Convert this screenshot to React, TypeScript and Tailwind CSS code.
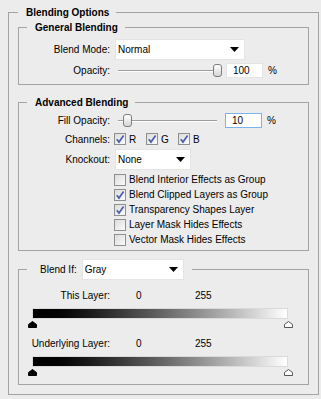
import React from "react"

function Arrow() {
  return (
    <svg width="9" height="5" viewBox="0 0 9 5">
      <path d="M0 0H9L4.5 5Z" fill="#000" />
    </svg>
  )
}

function Select({ value, w }: { value: string; w: string }) {
  return (
    <div className={`${w} h-[21px] bg-white border border-[#e4e4e4] flex items-center justify-between pl-[2px] pr-[5px]`}>
      <span>{value}</span>
      <Arrow />
    </div>
  )
}

function Check({ on }: { on?: boolean }) {
  return (
    <div className="w-[12px] h-[12px] border border-[#8e8f8f] bg-linear-to-br from-[#dcdcdc] to-[#fafafa] flex items-center justify-center">
      {on && (
        <svg width="10" height="10" viewBox="0 0 10 10">
          <path d="M1.8 5.2L4 8L8.6 1.4" fill="none" stroke="#4a5fb0" strokeWidth="1.7" />
        </svg>
      )}
    </div>
  )
}

function Slider({ thumb }: { thumb: number }) {
  return (
    <div className="relative w-[104px] h-[15px] flex items-center">
      <div className="ml-[3px] w-[99px] h-[2px] border-t border-[#9c9c9c] border-b border-b-white" />
      <div
        className="absolute top-[1px] w-[9px] h-[13px] rounded-[3px] border border-[#7d7d7d] bg-linear-to-b from-white to-[#d6d6d6]"
        style={{ left: thumb }}
      />
    </div>
  )
}

function NumBox({ value, focus }: { value: string; focus?: boolean }) {
  return (
    <div className="flex items-center">
      <div
        className={`w-[37px] h-[15px] bg-white border pl-[6px] flex items-center ${focus ? "border-[#7eb4ea]" : "border-[#e4e4e4]"}`}
      >
        {value}
      </div>
      <span className="ml-[5px]">%</span>
    </div>
  )
}

function Pin({ dark }: { dark?: boolean }) {
  return (
    <svg width="9" height="7" viewBox="0 0 9 7">
      <path
        d="M0.5 6.5V3.5L4.5 0.5L8.5 3.5V6.5Z"
        fill={dark ? "#000" : "#fff"}
        stroke={dark ? "#000" : "#555"}
      />
    </svg>
  )
}

function Ramp() {
  return (
    <div className="relative ml-[13px] w-[256px]">
      <div className="h-[11px] border border-[#dadada] bg-linear-to-r from-black to-white" />
      <div className="relative h-[7px] mt-[2px]">
        <div className="absolute left-[-4px] top-0">
          <Pin dark />
        </div>
        <div className="absolute right-[-5px] top-0">
          <Pin />
        </div>
      </div>
    </div>
  )
}

const Row = ({ label, children, h }: { label: string; children: React.ReactNode; h: string }) => (
  <div className={`flex items-center ${h}`}>
    <div className="w-[91px] text-right">{label}</div>
    <div className="ml-[5px] flex items-center">{children}</div>
  </div>
)

export default function App() {
  return (
    <div className="w-[321px] h-[399px] bg-[#ececec] pl-[8px] pr-[2px] pt-[6px] text-[10px] leading-[13px] text-black font-['Liberation_Sans',Arial,sans-serif]">
      <fieldset className="border border-[#a3a3a3] px-[9px] pb-[9px]">
        <legend className="pl-[8px] pr-[7px] font-bold">Blending Options</legend>

        <fieldset className="mt-[2px] border border-[#a3a3a3] pb-[6px]">
          <legend className="ml-[8px] pl-[8px] pr-[7px] font-bold">General Blending</legend>
          <div className="pt-[5px] flex flex-col gap-[3px]">
            <Row label="Blend Mode:" h="h-[21px]">
              <Select value="Normal" w="w-[130px]" />
            </Row>
            <Row label="Opacity:" h="h-[15px]">
              <Slider thumb={98} />
              <div className="ml-[7px]">
                <NumBox value="100" />
              </div>
            </Row>
          </div>
        </fieldset>

        <fieldset className="mt-[11px] border border-[#a3a3a3] pb-[3px]">
          <legend className="ml-[8px] pl-[8px] pr-[7px] font-bold">Advanced Blending</legend>
          <div className="pt-[4px] flex flex-col">
            <Row label="Fill Opacity:" h="h-[15px]">
              <Slider thumb={8} />
              <div className="ml-[6px]">
                <NumBox value="10" focus />
              </div>
            </Row>
            <div className="mt-[3px]">
              <Row label="Channels:" h="h-[16px]">
                <div className="-ml-[1px] flex items-center">
                  {["R", "G", "B"].map((c) => (
                    <div key={c} className="w-[32px] flex items-center gap-[3px]">
                      <Check on />
                      <span>{c}</span>
                    </div>
                  ))}
                </div>
              </Row>
            </div>
            <div className="mt-[2px]">
              <Row label="Knockout:" h="h-[21px]">
                <Select value="None" w="w-[76px]" />
              </Row>
            </div>
            <div className="mt-[2px] ml-[95px] flex flex-col">
              {[
                ["Blend Interior Effects as Group", false],
                ["Blend Clipped Layers as Group", true],
                ["Transparency Shapes Layer", true],
                ["Layer Mask Hides Effects", false],
                ["Vector Mask Hides Effects", false],
              ].map(([t, on]) => (
                <div key={t as string} className="h-[15px] flex items-center gap-[3px]">
                  <Check on={on as boolean} />
                  <span>{t as string}</span>
                </div>
              ))}
            </div>
          </div>
        </fieldset>

        <fieldset className="mt-[8px] border border-[#a3a3a3] pb-[8px]">
          <legend className="ml-[8px] pl-[13px] pr-[8px]">
            <div className="flex items-center">
              <span>Blend If:</span>
              <div className="ml-[5px]">
                <Select value="Gray" w="w-[102px]" />
              </div>
            </div>
          </legend>
          <div className="pt-[9px]">
            <div className="h-[12px] flex items-center">
              <div className="w-[91px] text-right">This Layer:</div>
              <span className="ml-[26px] w-[59px]">0</span>
              <span>255</span>
            </div>
            <div className="mt-[7px]">
              <Ramp />
            </div>
            <div className="mt-[9px] h-[12px] flex items-center">
              <div className="w-[91px] text-right">Underlying Layer:</div>
              <span className="ml-[26px] w-[59px]">0</span>
              <span>255</span>
            </div>
            <div className="mt-[7px]">
              <Ramp />
            </div>
          </div>
        </fieldset>
      </fieldset>
    </div>
  )
}
